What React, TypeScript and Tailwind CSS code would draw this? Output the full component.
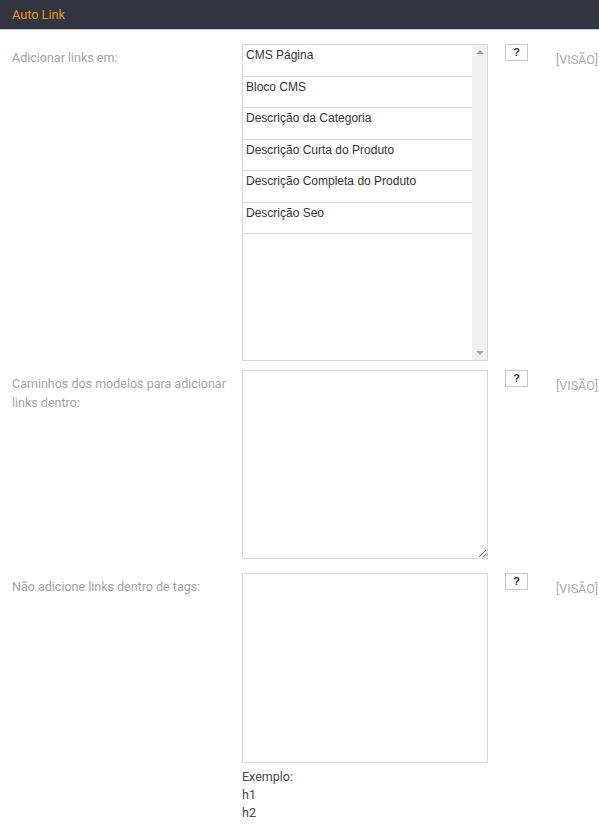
const options = [
    "CMS Página",
    "Bloco CMS",
    "Descrição da Categoria",
    "Descrição Curta do Produto",
    "Descrição Completa do Produto",
    "Descrição Seo",
];

function HelpCell() {
    return (
        <>
            <div className="w-[68px] shrink-0 pl-[17px]">
                <span className="flex h-[17px] w-[23px] items-center justify-center border border-[#c9c9c9] bg-white font-['Liberation_Sans',sans-serif] text-[11px] font-bold text-[#333]">
                    ?
                </span>
            </div>
            <div className="pt-[7px] font-['Roboto',sans-serif] text-[12.5px] text-[#adadad]">
                [VISÃO]
            </div>
        </>
    );
}

export default function App() {
    return (
        <div className="min-h-[830px] w-[599px] bg-white font-['Roboto',sans-serif] text-[12.5px]">
            {/* HEADER */}
            <div className="flex h-[30px] items-center border-b border-[#c8c8c8] bg-[#30353f] pl-3 text-[12.7px] text-[#f3920f]">
                Auto Link
            </div>

            {/* ADICIONAR LINKS EM */}
            <div className="flex pt-[14px]">
                <label className="w-[242px] shrink-0 pl-3 pr-3 pt-[5px] leading-[18px] text-[#a3a3a3]">
                    Adicionar links em:
                </label>
                <div className="flex h-[317px] w-[246px] shrink-0 border border-[#d6d6d6] font-['Liberation_Sans',sans-serif]">
                    <div className="flex-1">
                        {options.map((o) => (
                            <div
                                key={o}
                                className="h-[31.5px] border-b border-[#dcdcdc] pl-[3px] pt-[3px] text-[12px] leading-[14px] text-[#333]"
                            >
                                {o}
                            </div>
                        ))}
                    </div>
                    <div className="flex w-[15px] flex-col items-center justify-between bg-[#f1f1f1] py-[5px]">
                        <span className="h-0 w-0 border-x-[4px] border-b-[4px] border-x-transparent border-b-[#a3a3a3]" />
                        <span className="h-0 w-0 border-x-[4px] border-t-[4px] border-x-transparent border-t-[#a3a3a3]" />
                    </div>
                </div>
                <HelpCell />
            </div>

            {/* CAMINHOS */}
            <div className="flex pt-[9px]">
                <label className="w-[242px] shrink-0 pl-3 pr-2 pt-[4px] leading-[19px] text-[#a3a3a3]">
                    Caminhos dos modelos para adicionar links dentro:
                </label>
                <textarea
                    readOnly
                    className="block h-[189px] w-[246px] shrink-0 border border-[#d6d6d6] outline-none"
                />
                <HelpCell />
            </div>

            {/* NAO ADICIONE */}
            <div className="flex pt-[14px]">
                <label className="w-[242px] shrink-0 pl-3 pr-2 pt-[4px] leading-[19px] text-[#a3a3a3]">
                    Não adicione links dentro de tags:
                </label>
                <div className="w-[246px] shrink-0">
                    <textarea
                        readOnly
                        className="block h-[190px] w-[246px] resize-none border border-[#d6d6d6] outline-none"
                    />
                    <div className="pt-[5px] leading-[18px] text-[#444]">
                        <div>Exemplo:</div>
                        <div>h1</div>
                        <div>h2</div>
                    </div>
                </div>
                <HelpCell />
            </div>
        </div>
    );
}
